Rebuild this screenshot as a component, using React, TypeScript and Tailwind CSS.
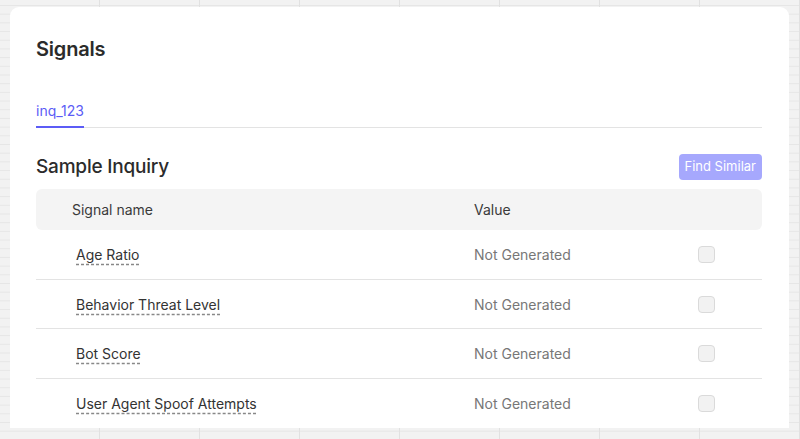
import { useState } from 'react';

const signals = [
  { name: 'Age Ratio', value: 'Not Generated' },
  { name: 'Behavior Threat Level', value: 'Not Generated' },
  { name: 'Bot Score', value: 'Not Generated' },
  { name: 'User Agent Spoof Attempts', value: 'Not Generated' },
];

const SignalRow = ({ name, value }: { name: string; value: string }) => {
  const [checked, setChecked] = useState(false);
  return (
    <div className="grid grid-cols-[438px_1fr_auto] items-center h-[49.7px] border-b border-[#e3e3e3]">
      <span className="pl-10 text-[14px] text-[#333] underline decoration-dashed decoration-[#888] underline-offset-[4px]">
        {name}
      </span>
      <span className="text-[14px] text-[#777]">{value}</span>
      <button
        type="button"
        onClick={() => setChecked(!checked)}
        className="mr-[47px] w-[17px] h-[17px] rounded-[4px] border border-[#dadada] bg-[#f2f2f2]"
        aria-label={`Select ${name}`}
      />
    </div>
  );
};

export default function App() {
  return (
    <div
      className="h-[439px] w-[800px] overflow-hidden pt-[7px] pl-[10px] pr-[11px] pb-[11px] bg-[#f2f2f2] bg-[linear-gradient(to_right,#e1e1e1_1px,transparent_1px),linear-gradient(to_bottom,#e6e6e6_1px,transparent_1px)] [background-size:100px_100%,100%_8.7px] [background-position:-1px_0,0_5px]"
      style={{ fontFamily: 'Inter, "Liberation Sans", sans-serif' }}
    >
      <div className="h-full bg-white rounded-t-[9px] overflow-hidden pt-[28px] pl-[26px] pr-[27px]">
        <h1 className="text-[20px] leading-[28px] font-semibold text-[#2b2b2b] tracking-[-0.2px]">Signals</h1>

        <div className="mt-[38px] flex border-b border-[#e3e3e3]">
          <button
            type="button"
            className="-mb-px pb-[5px] border-b-2 border-[#5c5cf6] text-[14px] leading-[20px] text-[#5c5cf6]"
          >
            inq_123
          </button>
        </div>

        <div className="mt-[25px] flex items-center justify-between h-[28px]">
          <h2 className="text-[19px] leading-[28px] font-medium text-[#2b2b2b] tracking-[-0.2px]">Sample Inquiry</h2>
          <button
            type="button"
            className="h-[26px] px-[6px] rounded-[4px] bg-[#a6a8fd] text-white text-[13px]"
          >
            Find Similar
          </button>
        </div>

        <div className="mt-[8px]">
          <div className="grid grid-cols-[438px_1fr] items-center h-[41px] rounded-[6px] bg-[#f4f4f4] text-[14px] text-[#3a3a3a]">
            <span className="pl-9">Signal name</span>
            <span>Value</span>
          </div>
          {signals.map((s) => (
            <SignalRow key={s.name} name={s.name} value={s.value} />
          ))}
        </div>
      </div>
    </div>
  );
}
